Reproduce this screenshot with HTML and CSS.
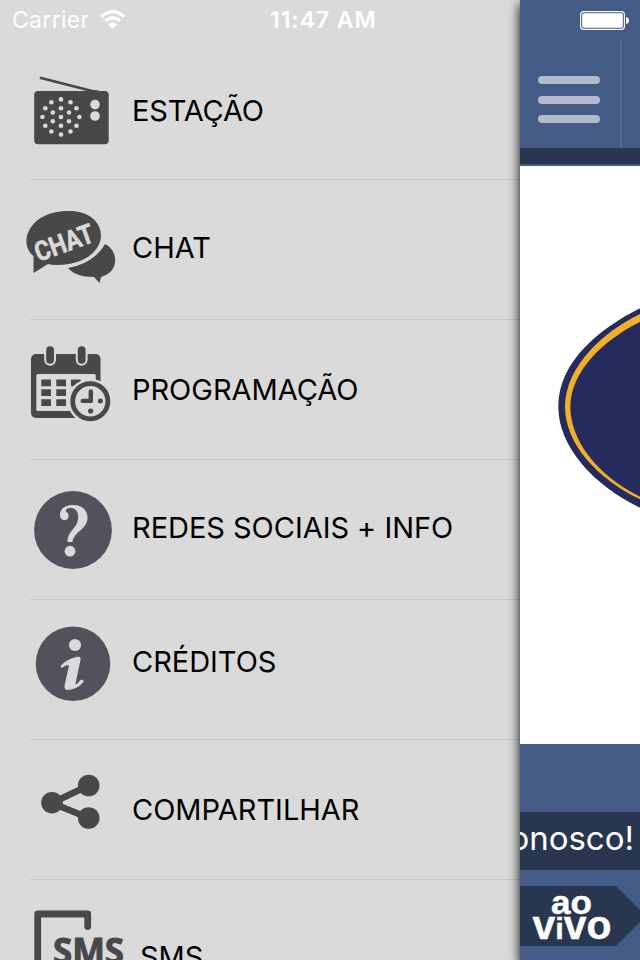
FILE: index.html
```html
<!DOCTYPE html>
<html lang="pt-BR">
<head>
<meta charset="utf-8">
<title>Menu</title>
<link rel="stylesheet" href="styles.css">
</head>
<body>
<div class="screen">
  <nav class="menu">
    <div class="row">
      <svg class="icon" viewBox="0 40 133 139">
        <path d="M41 78L96 92" stroke="#484848" stroke-width="2.8" stroke-linecap="round"/>
        <path d="M88 91l8-1 7 2z" fill="#484848"/>
        <rect x="34.2" y="91" width="74.5" height="53.3" rx="4" fill="#484848"/>
        <g fill="#dadada">
          <circle cx="95" cy="104.5" r="4.8"/><circle cx="95" cy="116" r="4.8"/>
          <circle cx="61" cy="99.4" r="2.3"/><circle cx="51.3" cy="102.2" r="2.3"/><circle cx="70.5" cy="102.2" r="2.3"/>
          <circle cx="45.3" cy="108.2" r="2.3"/><circle cx="61" cy="108.2" r="2.3"/><circle cx="76.5" cy="108.2" r="2.3"/>
          <circle cx="52.8" cy="112.5" r="2.3"/><circle cx="69" cy="112.5" r="2.3"/>
          <circle cx="42.4" cy="117" r="2.3"/><circle cx="61" cy="117" r="2.3"/><circle cx="79.4" cy="117" r="2.3"/>
          <circle cx="52.8" cy="121.3" r="2.3"/><circle cx="69" cy="121.3" r="2.3"/>
          <circle cx="45.3" cy="125.8" r="2.3"/><circle cx="61" cy="125.8" r="2.3"/><circle cx="76.5" cy="125.8" r="2.3"/>
          <circle cx="51.3" cy="131.5" r="2.3"/><circle cx="70.5" cy="131.5" r="2.3"/><circle cx="61" cy="134.6" r="2.3"/>
        </g>
      </svg>
      <span class="label estacao">ESTAÇÃO</span>
    </div>
    <div class="row">
      <svg class="icon" viewBox="0 180 133 139">
        <path d="M105 244C113 248 116 256 115 263C114 270 108 275 101 277L99.5 283L94 277C82 277 73 274 68 268C84 265 98 257 105 244Z" fill="#484848"/>
        <path d="M33.5 273V256C26 250 25 240 28 233C34 218 50 211 69 211C88 211 101 221 101 236C100 253 82 265 57 265Q51 265 48 264Z" fill="#484848"/>
        <text class="chat-art" x="38.5" y="262" transform="rotate(-20 38.5 262)" textLength="61" lengthAdjust="spacingAndGlyphs">CHAT</text>
      </svg>
      <span class="label chat">CHAT</span>
    </div>
    <div class="row">
      <svg class="icon" viewBox="0 320 133 139">
        <rect x="31" y="354" width="69.5" height="64" rx="5" fill="#484848"/>
        <rect x="36.3" y="374" width="59.5" height="37" rx="1.5" fill="#dadada"/>
        <g fill="#484848">
          <path d="M41.3 379.5h9.7v6.7h-9.7zM56.3 379.5h9.7v6.7h-9.7zM71 379.5h9.7v6.7h-9.7zM41.3 389.3h9.7v6.7h-9.7zM56.3 389.3h9.7v6.7h-9.7zM41.3 399.2h9.7v6.7h-9.7zM56.3 399.2h9.7v6.7h-9.7z"/>
          <rect x="45.2" y="345.2" width="9.8" height="19.5" rx="4.9" stroke="#dadada" stroke-width="2"/>
          <rect x="76.8" y="345.2" width="9.8" height="19.5" rx="4.9" stroke="#dadada" stroke-width="2"/>
        </g>
        <circle cx="90.3" cy="401.2" r="22.5" fill="#dadada"/>
        <circle cx="90.3" cy="401.2" r="17.6" fill="none" stroke="#484848" stroke-width="4.8"/>
        <path d="M90.8 391.5V400.9H82.7" fill="none" stroke="#484848" stroke-width="4.4" stroke-linecap="round" stroke-linejoin="round"/>
        <circle cx="100.4" cy="401" r="2.5" fill="#484848"/><circle cx="90.6" cy="411" r="2.6" fill="#484848"/>
      </svg>
      <span class="label programacao">PROGRAMAÇÃO</span>
    </div>
    <div class="row">
      <svg class="icon" viewBox="0 460 133 139">
        <circle cx="73" cy="530" r="38.9" fill="#52525c"/>
        <path d="M67.5 542C67 531 77 529 78 519C79 511 75 508 70.5 508C67 508 65.5 509.5 66 511.5C68 513 69 515 68.5 517C67 522 60 521 60 515C60 508 66 505 73 505C82 505 87.5 510 87.5 518C87 530 74 531 72.5 542Z" fill="#dadada"/>
        <circle cx="70" cy="551.2" r="5.4" fill="#dadada"/>
      </svg>
      <span class="label redes">REDES SOCIAIS + INFO</span>
    </div>
    <div class="row">
      <svg class="icon" viewBox="0 600 133 139">
        <circle cx="73" cy="663.7" r="37.3" fill="#52525c"/>
        <circle cx="75" cy="645" r="6.1" fill="#dadada"/>
        <path d="M60.5 666C65 661 72 657 79 656.7Q81 657 80.5 660L75.3 684.5C78 684.5 79 680.5 81.5 679.5L84 681C80 687 73 690 66.5 690Q64 689 64.7 685L69 665.5C66 664.5 64 667 61.5 668Z" fill="#dadada"/>
      </svg>
      <span class="label creditos">CRÉDITOS</span>
    </div>
    <div class="row">
      <svg class="icon" viewBox="0 740 133 139">
        <path d="M88.7 785.5L52 803L88.7 818" fill="none" stroke="#484848" stroke-width="6.6"/>
        <g fill="#484848"><circle cx="88.7" cy="785.5" r="10.8"/><circle cx="52" cy="802.7" r="10.8"/><circle cx="88.7" cy="818" r="10.8"/></g>
      </svg>
      <span class="label compartilhar">COMPARTILHAR</span>
    </div>
    <div class="row">
      <svg class="icon" viewBox="0 880 133 139">
        <path d="M37.7 980V914H87.7V926.5" fill="none" stroke="#484848" stroke-width="6.8" stroke-linejoin="round" stroke-linecap="round"/>
        <text class="sms-art" x="53" y="964" textLength="71" lengthAdjust="spacingAndGlyphs">SMS</text>
      </svg>
      <span class="label sms">SMS</span>
    </div>
  </nav>

  <main class="player">
    <header class="topbar">
      <div class="burger"><i></i><i></i><i></i></div>
      <div class="divider"></div>
    </header>
    <div class="strip"></div>
    <div class="cover">
      <svg class="logo" viewBox="520 280 120 250">
        <g transform="translate(500 280) scale(.33333)">
          <path fill="#252b5c" d="M425 82L420 85C300 145 175 245 175 380C175 500 280 615 420 683L425 685Z"/>
          <path fill="#f2b02a" d="M425 100L420 102C310 155 195 260 195 380C195 490 290 595 420 658L425 660Z"/>
          <path fill="#252b5c" d="M425 124L420 126C310 180 211 275 211 380C211 480 290 585 420 650L425 652Z"/>
        </g>
      </svg>
    </div>
    <div class="ticker"><span>onosco!</span></div>
    <svg class="live" viewBox="520 886 120 60">
      <path d="M520 886H616L646 916L616 946H520Z" fill="#28364f"/>
      <text x="551" y="913.5" font-size="34" textLength="41" lengthAdjust="spacingAndGlyphs">ao</text>
      <text x="532.5" y="939" font-size="40" textLength="79" lengthAdjust="spacingAndGlyphs">v<tspan font-size="30">i</tspan>vo</text>
    </svg>
  </main>

  <div class="status">
    <span class="carrier">Carrier</span>
    <svg class="wifi" viewBox="100 10 26 20">
      <path d="M101.3 16.7Q112.7 6.5 124 16.7M105.3 21Q112.7 14.5 120 21" fill="none" stroke="#fff" stroke-width="3.2"/>
      <path d="M108 24.4Q112.7 20.7 117.2 24.4L112.6 29Z" fill="#fff"/>
    </svg>
    <span class="time">11:47 AM</span>
    <svg class="battery" viewBox="579 10 50 21">
      <rect x="580.6" y="11.6" width="43.8" height="17.8" rx="3" fill="none" stroke="#fff" stroke-width="1.1"/>
      <rect x="582.2" y="13.2" width="40.6" height="14.6" rx="1.5" fill="#fff"/>
      <path d="M626 17Q629 17.5 629 20.5T626 24Z" fill="#fff"/>
    </svg>
  </div>
</div>
</body>
</html>
```
FILE: styles.css
```css
* { box-sizing: border-box; }
body { margin: 0; font-family: Inter, "Liberation Sans", sans-serif; }
.screen { position: relative; display: grid; grid-template-columns: 520px 120px; width: 640px; height: 960px; overflow: hidden; background: #dadada; }
.menu { height: 960px; padding-top: 40px; overflow: hidden; }
.row { display: flex; height: 140px; background: linear-gradient(#c8c8c8, #c8c8c8) 30px 139px / 490px 1px no-repeat; }
.icon { flex: none; display: block; width: 133px; height: 139px; }
.label { font-size: 29px; line-height: 36px; color: #000; white-space: nowrap; letter-spacing: -0.03px; margin-left: -1px; }
.estacao { margin-top: 53px; letter-spacing: -0.2px; }
.chat { margin-top: 50px; }
.programacao { margin-top: 52px; }
.redes { margin-top: 50px; }
.creditos { margin-top: 44px; }
.compartilhar { margin-top: 52px; }
.sms { margin-top: 59px; margin-left: 7px; }
.chat-art { font: 700 27px Roboto, sans-serif; fill: #dadada; stroke: #dadada; stroke-width: .6px; }
.sms-art { font: 700 36px "Open Sans", sans-serif; fill: #484848; stroke: #484848; stroke-width: 1px; }
.player { display: flex; flex-direction: column; height: 960px; background: #445b85; box-shadow: 0 5px 10px 1px rgba(0,0,0,.85); clip-path: inset(0 0 0 -20px); }
.topbar { display: flex; height: 148px; padding: 40px 0 0 18px; }
.burger { display: flex; flex-direction: column; gap: 11.5px; width: 82px; padding-top: 36px; }
.burger i { display: block; width: 62px; height: 8px; border-radius: 4px; background: #b3bccf; }
.divider { width: 2px; height: 107px; background: #566d93; }
.strip { height: 18px; background: #28364f; border-bottom: 2px solid #445b85; }
.cover { height: 578px; padding-top: 114px; background: #fff; }
.logo { display: block; width: 120px; height: 250px; }
.ticker { display: flex; justify-content: flex-end; height: 58px; margin-top: 68px; padding-right: 6px; overflow: hidden; background: #28364f; color: #fff; font-size: 33px; line-height: 52px; }
.live { display: block; width: 120px; height: 60px; margin-top: 16px; font-family: "Liberation Sans", sans-serif; font-weight: 700; fill: #fff; stroke: #fff; stroke-width: .4px; }
.live path { stroke: none; }
.status { position: absolute; top: 0; left: 0; display: flex; align-items: center; width: 640px; height: 40px; color: #fff; font-size: 23px; line-height: 41px; white-space: nowrap; }
.carrier { width: 88px; margin-left: 12px; letter-spacing: .3px; }
.wifi { width: 26px; height: 20px; }
.time { width: 120px; margin-left: 144px; font-weight: 600; letter-spacing: .95px; }
.battery { width: 50px; height: 21px; margin-left: 189px; }
```
